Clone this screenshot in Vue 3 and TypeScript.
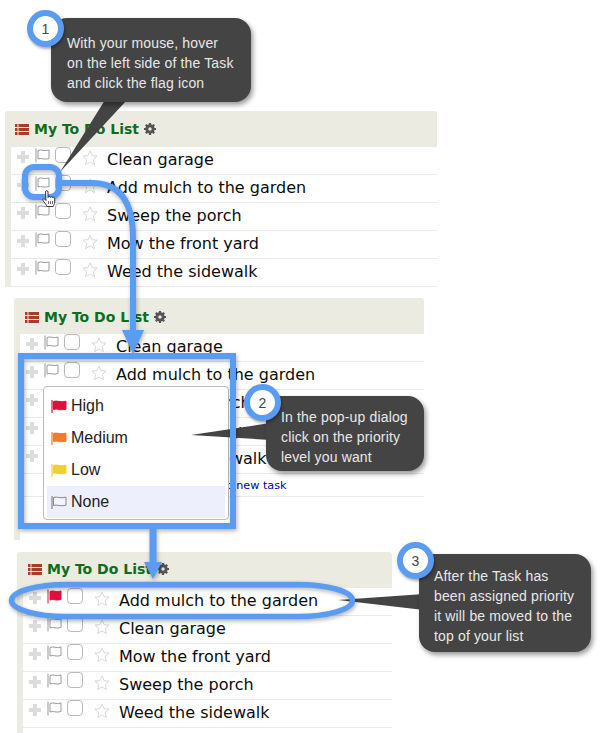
<script setup lang="ts">
const panels = [
  { id: 'one', tasks: ['Clean garage', 'Add mulch to the garden', 'Sweep the porch', 'Mow the front yard', 'Weed the sidewalk'], first: '', link: false, menu: false },
  { id: 'two', tasks: ['Clean garage', 'Add mulch to the garden', 'Sweep the porch', 'Mow the front yard', 'Weed the sidewalk'], first: '', link: true, menu: true },
  { id: 'three', tasks: ['Add mulch to the garden', 'Clean garage', 'Mow the front yard', 'Sweep the porch', 'Weed the sidewalk'], first: '#e0103c', link: false, menu: false },
]
const levels = [
  { name: 'High', color: '#e0103c' },
  { name: 'Medium', color: '#f47a2a' },
  { name: 'Low', color: '#f0cf30' },
  { name: 'None', color: '' },
]
</script>

<template>
  <div class="canvas">
    <section v-for="p in panels" :key="p.id" class="panel" :class="p.id">
      <header class="head">
        <svg class="list-ico" width="14" height="11" viewBox="0 0 14 11">
          <path fill="#a83c28" d="M0 0h2.500v3H0zM3.500 0H14v3H3.500zM0 4h2.500v3H0zM3.500 4H14v3H3.500zM0 8h2.500v3H0zM3.500 8H14v3H3.500z" />
        </svg>
        <h2 class="title">My To Do List</h2>
        <svg class="gear" width="12" height="12" viewBox="0 0 12 12">
          <circle cx="6" cy="6" r="3.200" fill="none" stroke="#555" stroke-width="3" />
          <path stroke="#555" stroke-width="2.200" d="M6 0v2.500M6 9.500V12M0 6h2.500M9.500 6H12M1.800 1.800l1.800 1.800M8.400 8.400l1.800 1.800M10.200 1.800L8.400 3.600M3.600 8.400l-1.800 1.800" />
        </svg>
      </header>
      <ul class="rows">
        <li v-for="(t, i) in p.tasks" :key="t" class="row">
          <svg class="plus" width="12" height="12" viewBox="0 0 12 12">
            <path fill="#dcdcdc" d="M4 0h4v4h4v4H8v4H4V8H0V4h4z" />
          </svg>
          <svg class="flag" width="15" height="15" viewBox="0 0 15 15">
            <path d="M1 .5v14" :stroke="i === 0 && p.first ? p.first : '#999'" stroke-width="1" fill="none" />
            <path
              d="M3 2.500C6 .8 9 3.800 14 2v8.500c-5 1.800-8-1.200-11 .5z"
              :fill="i === 0 && p.first ? p.first : '#fff'"
              :stroke="i === 0 && p.first ? p.first : '#999'"
            />
          </svg>
          <span class="check"></span>
          <svg class="star" width="16" height="16" viewBox="0 0 17 17">
            <path fill="#fff" stroke="#d4d4d4" d="M8.500 1l2.200 5 5.300.5-4 3.600 1.200 5.400-4.700-2.800-4.700 2.800 1.200-5.400-4-3.600 5.300-.5z" />
          </svg>
          <span class="task">{{ t }}</span>
        </li>
        <li v-if="p.link" class="row link-row"><a class="add">Add new task</a></li>
      </ul>
      <div v-if="p.menu" class="menu">
        <div v-for="l in levels" :key="l.name" class="level" :class="{ active: !l.color }">
          <svg width="16" height="15" viewBox="0 0 16 15">
            <path d="M1 1v13" :stroke="l.color || '#888'" stroke-width="1.200" fill="none" />
            <path
              d="M2.500 2.500C6 1 9 4 15 2.200v8c-6 1.800-9-1.200-12.500.3z"
              :fill="l.color || '#f4f4fc'"
              :stroke="l.color || '#888'"
            />
          </svg>
          <span>{{ l.name }}</span>
        </div>
      </div>
    </section>

    <svg class="overlay" width="600" height="733" viewBox="0 0 600 733">
      <g class="dark">
        <path d="M105 100L127 100L60 172z" />
        <path d="M191 435L270 423V440z" />
        <path d="M338 600L424 594V610z" />
      </g>
      <g class="blue" fill="none" stroke="#5b9cf3">
        <rect x="25" y="167" width="34" height="30" rx="9" stroke-width="6" />
        <path stroke-width="6" d="M62 183H92C118 183 133 200 133 238V332" />
        <path fill="#5b9cf3" stroke="none" d="M122 330H144L133 354z" />
        <rect x="21" y="356" width="212" height="170" stroke-width="6" />
        <path stroke-width="7" d="M153 529V564" />
        <path fill="#5b9cf3" stroke="none" d="M144 562H162L153 579z" />
        <rect x="11.500" y="584.500" width="341" height="32" rx="55" ry="16" stroke-width="5.500" />
      </g>
      <g>
        <path fill="#fff" stroke="#222" stroke-width=".9" stroke-linejoin="round"
          d="M45.500 192c0-1.800 2.500-1.800 2.500 0v5.500c.2-1.400 2.200-1.400 2.400 0 .2-1.100 2.100-1.100 2.300.2.300-.9 2-.7 2 .7v3.600c0 2-1 3-1.500 4.500h-6c-.8-1.800-3.200-4.200-4.200-6.200-.6-1.300 1-2.100 2-1l1 1.200z" />
        <path stroke="#444" stroke-width=".8" d="M48.500 201v3M50.500 201v3M52.500 201v3" />
      </g>
    </svg>

    <aside class="callout c1">With your mouse, hover<br />on the left side of the Task<br />and click the flag icon</aside>
    <aside class="callout c2">In the pop-up dialog<br />click on the priority<br />level you want</aside>
    <aside class="callout c3">After the Task has<br />been assigned priority<br />it will be moved to the<br />top of your list</aside>
    <span class="badge b1">1</span>
    <span class="badge b2">2</span>
    <span class="badge b3">3</span>
  </div>
</template>

<style>
html, body { background: #fff; }
</style>

<style scoped>
.canvas {
  position: relative;
  width: 600px;
  height: 733px;
  overflow: hidden;
  background: #fff;
}
.panel {
  position: absolute;
  background: #ecebe1;
  padding-left: 6px;
  box-sizing: border-box;
  border-radius: 3px 3px 0 0;
}
.one { left: 5px; top: 111px; width: 432px; height: 176px; }
.two { left: 14px; top: 298px; width: 410px; height: 242px; }
.three { left: 17px; top: 552px; width: 375px; height: 190px; }
.head {
  height: 36px;
  box-sizing: border-box;
  margin-left: -1px;
  padding-left: 5px;
  display: flex;
  align-items: center;
  gap: 5px;
}
.two .head { padding: 2px 0 0 6px; }
.three .head { padding: 0 0 2px 6px; }
.list-ico { flex: none; }
.title {
  margin: 0;
  font: bold 14px "DejaVu Sans", sans-serif;
  color: #0b6e1f;
}
.gear { flex: none; }
.rows {
  list-style: none;
  margin: 0;
  padding: 0;
  background: #fff;
  height: calc(100% - 36px);
}
.row {
  height: 27px;
  border-bottom: 1px solid #e8e8ee;
  padding: 0 0 0 6px;
  display: flex;
  align-items: flex-start;
  position: relative;
}
.plus { margin: 4px 6px 0 0; flex: none; }
.flag { margin: 1px 5px 0 0; flex: none; }
.check {
  flex: none;
  width: 14px;
  height: 14px;
  margin: 0 11px 0 0;
  border: 1px solid #b8b8b8;
  border-radius: 4px;
  background: #fff;
}
.star { margin: 3px 9px 0 0; flex: none; }
.task {
  font: 16px/24px "DejaVu Sans", sans-serif;
  color: #0c0c0c;
  margin-top: 1px;
}
.link-row {
  height: 22px;
  padding-left: 191px;
  align-items: center;
}
.add {
  font: 11.200px "DejaVu Sans", sans-serif;
  color: #0000a8;
}
.menu {
  position: absolute;
  left: 29px;
  top: 88px;
  width: 186px;
  height: 134px;
  padding: 3px;
  box-sizing: border-box;
  background: #fff;
  border: 1px solid #bbb;
  border-radius: 4px;
}
.level {
  height: 32px;
  display: flex;
  align-items: center;
  gap: 4px;
  padding-left: 4px;
  font: 16px "Liberation Sans", sans-serif;
  color: #222;
}
.level svg { flex: none; }
.active { background: #eeeffc; }
.overlay {
  position: absolute;
  left: 0;
  top: 0;
  pointer-events: none;
}
.dark { fill: #444; }
.blue { filter: drop-shadow(1px 2px 2px rgba(0, 0, 0, 0.3)); }
.callout {
  position: absolute;
  box-sizing: border-box;
  background: #444;
  color: #e8e8e8;
  border-radius: 16px;
  font: 14px/20px "Liberation Sans", sans-serif;
  letter-spacing: 0.15px;
  white-space: nowrap;
  box-shadow: 2px 3px 5px rgba(0, 0, 0, 0.4);
}
.c1 { left: 51px; top: 18px; width: 200px; height: 84px; padding: 15px 0 0 16px; }
.c2 { left: 266px; top: 396px; width: 158px; height: 75px; padding: 11px 0 0 15px; }
.c3 { left: 419px; top: 554px; width: 172px; height: 98px; padding: 12px 0 0 15px; }
.badge {
  position: absolute;
  width: 37px;
  height: 37px;
  box-sizing: border-box;
  display: flex;
  align-items: center;
  justify-content: center;
  background: #fff;
  border: 6px solid #5b9cf3;
  border-radius: 50%;
  font: 14px "Liberation Sans", sans-serif;
  color: #444;
  box-shadow: 1px 2px 3px rgba(0, 0, 0, 0.35);
}
.b1 { left: 27px; top: 10px; }
.b2 { left: 244px; top: 384px; }
.b3 { left: 397px; top: 542px; }
</style>
